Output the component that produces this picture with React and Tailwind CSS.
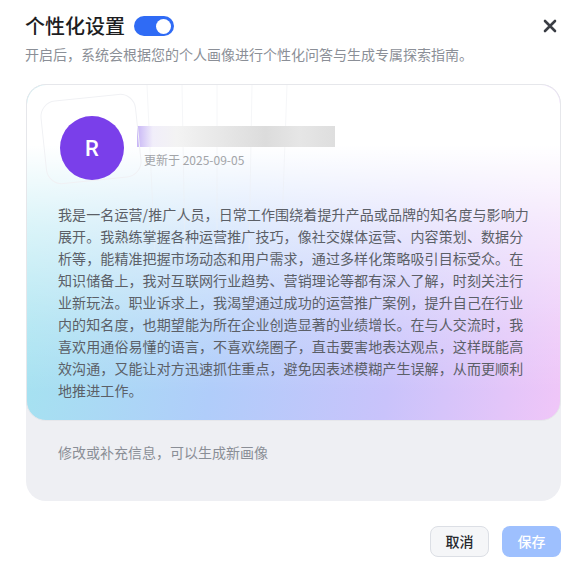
import React from "react";

const lines = [
  "我是一名运营/推广人员，日常工作围绕着提升产品或品牌的知名度与影响力",
  "展开。我熟练掌握各种运营推广技巧，像社交媒体运营、内容策划、数据分",
  "析等，能精准把握市场动态和用户需求，通过多样化策略吸引目标受众。在",
  "知识储备上，我对互联网行业趋势、营销理论等都有深入了解，时刻关注行",
  "业新玩法。职业诉求上，我渴望通过成功的运营推广案例，提升自己在行业",
  "内的知名度，也期望能为所在企业创造显著的业绩增长。在与人交流时，我",
  "喜欢用通俗易懂的语言，不喜欢绕圈子，直击要害地表达观点，这样既能高",
  "效沟通，又能让对方迅速抓住重点，避免因表述模糊产生误解，从而更顺利",
  "地推进工作。",
];

export default function App() {
  return (
    <div className="w-[588px] h-[563px] bg-white px-[25px] pt-[14px] font-['Noto_Sans_CJK_SC','Noto_Sans',sans-serif] overflow-hidden">
      {/* Header */}
      <div className="flex items-center h-[24px]">
        <span className="text-[20px] leading-[24px] font-medium text-[#1d1d1f]">个性化设置</span>
        <div className="ml-[9px] w-[40px] h-[20px] rounded-full bg-[#2f6bf5] flex items-center justify-end pr-[3px]">
          <div className="w-[15px] h-[15px] rounded-full bg-white" />
        </div>
        <div className="ml-auto mr-[6px] flex items-center justify-center">
          <svg width="14" height="14" viewBox="0 0 14 14">
            <path d="M2 2 L12 12 M12 2 L2 12" stroke="#3a3d44" strokeWidth="2.6" strokeLinecap="round" />
          </svg>
        </div>
      </div>
      <div className="mt-[6px] text-[14px] leading-[20px] text-[#8b8f97] whitespace-nowrap">
        开启后，系统会根据您的个人画像进行个性化问答与生成专属探索指南。
      </div>

      {/* Main box */}
      <div className="mt-[20px] ml-[1px] w-[535px] h-[417px] rounded-[20px] bg-[#eeeff3] flex flex-col">
        <div className="relative h-[337px] rounded-[20px] border border-[#e6e7eb] overflow-hidden bg-[linear-gradient(100deg,#a3e7ee_0%,#b0cdfa_40%,#c9c3fb_70%,#f0c6f8_100%)]">
          <div className="absolute inset-0 bg-[linear-gradient(to_bottom,#ffffff_0%,#ffffff_18%,rgba(255,255,255,0.6)_42%,rgba(255,255,255,0.2)_72%,rgba(255,255,255,0)_92%)]" />
          <svg className="absolute inset-0" width="535" height="337">
            <g stroke="#eceef2" strokeWidth="1" opacity="0.5">
              <line x1="120" y1="0" x2="128" y2="170" />
              <line x1="155" y1="0" x2="158" y2="170" />
              <line x1="190" y1="0" x2="190" y2="170" />
              <line x1="225" y1="0" x2="222" y2="170" />
              <line x1="260" y1="0" x2="254" y2="170" />
            </g>
          </svg>
          <div className="relative">
            {/* Profile row */}
            <div className="flex items-start pt-[12px] pl-[16px]">
              <div className="relative w-[98px] h-[86px] flex items-center justify-center">
                <div className="absolute left-0 top-0 w-[96px] h-[84px] rounded-[16px] border border-[#f0f1f4] rotate-[-6deg]" />
                <div className="relative mt-[16px] w-[64px] h-[64px] rounded-full bg-[#7a3fea] flex items-center justify-center text-white text-[22px] font-medium font-['Roboto',sans-serif]">
                  R
                </div>
              </div>
              <div className="ml-[-4px] mt-[29px] flex flex-col">
                <div className="w-[198px] h-[21px] bg-[linear-gradient(to_right,#c8b6f6_0%,#f1eefa_8%,#f3f3f3_20%,#e6e6e6_45%,#dcdcdc_65%,#e6e6e6_82%,#dedede_100%)]" />
                <div className="mt-[5px] ml-[7px] text-[12px] leading-[16px] text-[#a2a4a8]">更新于 2025-09-05</div>
              </div>
            </div>
            {/* Body text */}
            <div className="mt-[20px] pl-[31px] text-[14px] leading-[22px] tracking-[0.1px] text-[#5b5f67]">
              {lines.map((l, i) => (
                <div key={i} className="whitespace-nowrap">{l}</div>
              ))}
            </div>
          </div>
        </div>
        <div className="pl-[32px] pt-[21px] text-[14px] leading-[20px] text-[#8a8e96]">修改或补充信息，可以生成新画像</div>
      </div>

      {/* Footer buttons */}
      <div className="mt-[25px] flex justify-end gap-[13px] pr-[2px]">
        <button className="w-[59px] h-[31px] rounded-[8px] border border-[#dcdfe5] bg-[#f5f6f8] text-[14px] font-medium text-[#26282c]">取消</button>
        <button className="w-[59px] h-[31px] rounded-[8px] bg-[#9ec0fe] text-[14px] font-medium text-white">保存</button>
      </div>
    </div>
  );
}
